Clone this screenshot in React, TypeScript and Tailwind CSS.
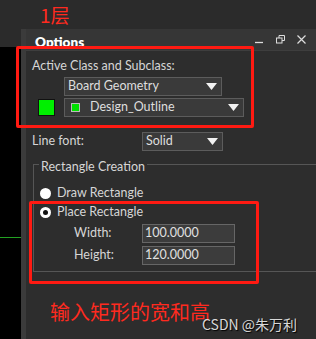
import React from 'react';

const ui = { fontFamily: 'Lato, "Noto Sans", "Noto Sans CJK SC", sans-serif' };
const cjk = { fontFamily: '"Noto Sans CJK SC", "Noto Sans", sans-serif' };

function Arrow() {
  return (
    <svg width="11" height="8" viewBox="0 0 11 8">
      <path d="M0 0H11L5.5 7Z" fill="#f2f2f2" />
    </svg>
  );
}

function Select({ w, children }: { w: string; children: React.ReactNode }) {
  return (
    <div className={`${w} h-[19px] bg-[#3a3a3a] border border-[#5c5c5c] flex items-center pl-[3px] pr-[4px] text-[12.5px] text-[#dedede]`}>
      <div className="flex-1 flex items-center">{children}</div>
      <Arrow />
    </div>
  );
}

function Field({ label, value }: { label: string; value: string }) {
  return (
    <div className="flex items-center h-[19px]">
      <span className="w-[68px] pl-[40px] text-[12.5px] text-[#d6d6d6] box-content">{label}</span>
      <div className="w-[93px] h-[19px] bg-[#3c3c3c] border border-[#666] flex items-center pl-[2px] text-[12.5px] text-[#e0e0e0]">
        {value}
      </div>
    </div>
  );
}

export default function App() {
  return (
    <div className="w-[316px] h-[339px] bg-[#2b2b2b] relative overflow-hidden" style={ui}>
      <div className="h-[29px] pl-[40px] pt-[4px] text-[19px] leading-[22px] text-[#ff2a1f]" style={cjk}>
        1层
      </div>
      <div className="flex h-[310px]">
        <div className="w-[21px] flex flex-col">
          <div className="h-[18px] bg-[#2b2b2b]" />
          <div className="flex-1 bg-black relative">
            <div className="absolute left-0 right-0 top-[190px] h-px bg-[#22a022]" />
          </div>
        </div>
        <div className="flex-1 flex">
          <div className="w-[5px] bg-[#3b3b3b]" />
          <div className="flex-1 flex flex-col bg-[#2d2d2d]">
            <div className="h-[22px] bg-[#363636] border-b border-[#3e3e3e] flex items-center pl-[9px] pr-[10px]">
              <span className="text-[13.5px] font-extrabold text-white flex-1 mt-[6px]">Options</span>
              <svg width="9" height="9" viewBox="0 0 9 9" className="mt-[6px]">
                <path d="M0 4.5H8" stroke="#ddd" strokeWidth="1.3" />
              </svg>
              <svg width="9" height="9" viewBox="0 0 9 9" className="ml-[12px]">
                <rect x="0.5" y="3" width="5.5" height="5" fill="none" stroke="#ddd" />
                <path d="M3 3V0.5H8.5V5.5H6" fill="none" stroke="#ddd" />
              </svg>
              <svg width="9" height="9" viewBox="0 0 9 9" className="ml-[12px]">
                <path d="M0.5 0.5L8.5 8.5M8.5 0.5L0.5 8.5" stroke="#ddd" strokeWidth="1.2" />
              </svg>
            </div>

            <div className="flex flex-col pl-[6px]">
              <div className="mt-[7px] h-[16px] leading-[16px] text-[12.5px] text-[#d6d6d6]">Active Class and Subclass:</div>
              <div className="mt-[3px] pl-[32px]">
                <Select w="w-[158px]">Board Geometry</Select>
              </div>
              <div className="mt-[2px] flex items-center">
                <div className="ml-[6px] w-[17px] h-[17px] bg-[#00f000] border border-[#111]" />
                <div className="ml-[9px]">
                  <Select w="w-[180px]">
                    <div className="ml-[3px] w-[9px] h-[9px] bg-[#00e000] border border-[#bbb]" />
                    <span className="ml-[10px]">Design_Outline</span>
                  </Select>
                </div>
              </div>
              <div className="mt-[15px] flex items-center">
                <span className="w-[110px] text-[12.5px] text-[#d6d6d6]">Line font:</span>
                <Select w="w-[81px]">Solid</Select>
              </div>

              <div className="mt-[13px] ml-[1px] h-[108px] border-t border-l border-b border-[#565656] flex flex-col">
                <div className="-mt-[6px] ml-[5px] self-start bg-[#2d2d2d] px-[2px] h-[16px] leading-[16px] text-[12.5px] text-[#d6d6d6]">
                  Rectangle Creation
                </div>
                <div className="mt-[10px] flex items-center h-[16px] pl-[6px]">
                  <div className="w-[11px] h-[11px] rounded-full bg-white" />
                  <span className="ml-[6px] text-[12.5px] text-[#d6d6d6]">Draw Rectangle</span>
                </div>
                <div className="mt-[3px] flex items-center h-[16px] pl-[6px]">
                  <div className="w-[11px] h-[11px] rounded-full bg-white flex items-center justify-center">
                    <div className="w-[5px] h-[5px] rounded-full bg-[#111]" />
                  </div>
                  <span className="ml-[6px] text-[12.5px] text-[#d6d6d6]">Place Rectangle</span>
                </div>
                <div className="mt-[4px] flex flex-col gap-[3px]">
                  <Field label="Width:" value="100.0000" />
                  <Field label="Height:" value="120.0000" />
                </div>
              </div>

              <div className="mt-[29px] pl-[18px] text-[20px] leading-[22px] text-[#ff2a1f]" style={cjk}>
                输入矩形的宽和高
              </div>
            </div>
          </div>
        </div>
      </div>

      <div
        className="absolute left-[202px] top-[314px] text-[14px] text-[#d8d8d8]"
        style={{ ...cjk, textShadow: '1px 1px 1px #000' }}
      >
        CSDN @朱万利
      </div>

      <div className="absolute left-[16px] top-[46px] w-[238px] h-[82px] border-[3px] border-[#ff1a12] rounded-[2px]" />
      <div className="absolute left-[29px] top-[201px] w-[230px] h-[83px] border-[3px] border-[#ff1a12] rounded-[2px]" />
    </div>
  );
}
